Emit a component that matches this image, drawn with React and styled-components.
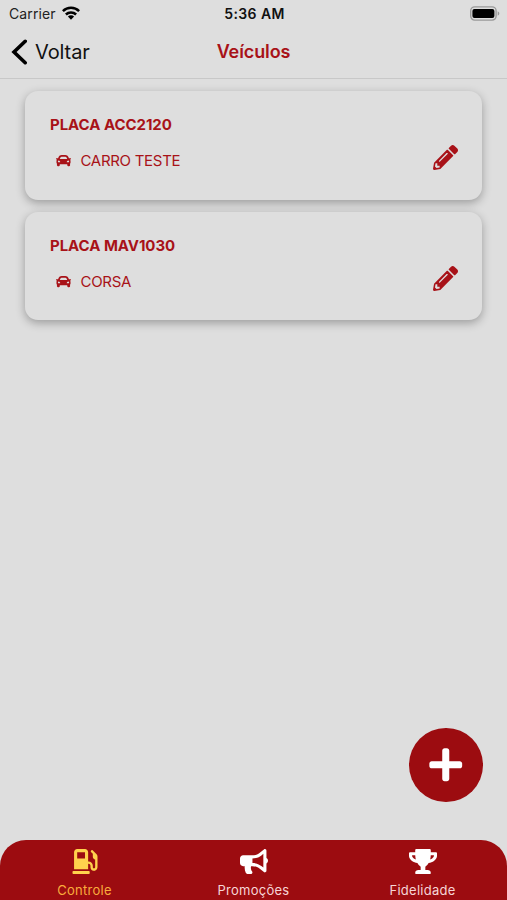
import React from 'react';
import styled, { createGlobalStyle } from 'styled-components';
import {
  FaBullhorn,
  FaCar,
  FaGasPump,
  FaPencilAlt,
  FaPlus,
  FaTrophy,
} from 'react-icons/fa';

const vehicles = [
  { id: 1, plate: 'ACC2120', model: 'CARRO TESTE' },
  { id: 2, plate: 'MAV1030', model: 'CORSA' },
];

const tabs = [
  { label: 'Controle', Icon: FaGasPump, active: true },
  { label: 'Promoções', Icon: FaBullhorn },
  { label: 'Fidelidade', Icon: FaTrophy },
];

const StatusBar = () => (
  <Status>
    <Carrier>
      Carrier
      <svg width='18' height='14' viewBox='0 0 18 14'>
        <g fill='none' stroke='#000' strokeWidth='2.5'>
          <path d='M0.9 5.2a11.5 11.5 0 0 1 16.2 0' />
          <path d='M3.9 8.5a7.2 7.2 0 0 1 10.2 0' />
        </g>
        <path d='M9 13.8L5.9 10.6a4.4 4.4 0 0 1 6.2 0z' />
      </svg>
    </Carrier>
    <Time>5:36 AM</Time>
    <Battery>
      <svg width='31' height='15' viewBox='0 0 31 15'>
        <rect x='1.7' y='0.9' width='25.4' height='13.2' rx='4' fill='none' stroke='#999' strokeWidth='1.4' />
        <rect x='3.4' y='2.9' width='22' height='9.2' rx='2' />
        <path d='M28.7 5.2c2.2 1.1 2.2 3.5 0 4.6z' fill='#999' />
      </svg>
    </Battery>
  </Status>
);

const Vehicle = ({ plate, model }) => (
  <Card>
    <div>
      <Plate>PLACA {plate}</Plate>
      <Model>
        <FaCar size={15} />
        <span>{model}</span>
      </Model>
    </div>
    <EditButton aria-label='Editar'>
      <FaPencilAlt size={25} />
    </EditButton>
  </Card>
);

const App = () => {
  return (
    <Screen>
      <GlobalStyle />
      <StatusBar />
      <Header>
        <BackButton>
          <svg width='16' height='26' viewBox='0 0 16 26'>
            <path
              d='M14.2 2.3L3 13l11.2 10.7'
              fill='none'
              stroke='#000'
              strokeWidth='3.6'
              strokeLinecap='round'
            />
          </svg>
          <span>Voltar</span>
        </BackButton>
        <Title>Veículos</Title>
      </Header>
      <List>
        {vehicles.map((vehicle) => (
          <Vehicle key={vehicle.id} {...vehicle} />
        ))}
      </List>
      <Actions>
        <AddButton aria-label='Adicionar'>
          <FaPlus size={37.5} />
        </AddButton>
      </Actions>
      <TabBar>
        {tabs.map(({ label, Icon, active }) => (
          <Tab key={label} $active={active}>
            <Icon />
            <span>{label}</span>
          </Tab>
        ))}
      </TabBar>
    </Screen>
  );
};

export default App;

const GlobalStyle = createGlobalStyle`
  :root {
    --bg: #dedede;
    --red: #9c0c10;
    --red-text: #a81218;
    --yellow: #ffd24d;
  }
  * {
    box-sizing: border-box;
  }
  body {
    margin: 0;
    background: var(--bg);
    font-family: Inter, 'Liberation Sans', sans-serif;
  }
  button {
    padding: 0;
    border: none;
    background: none;
    font: inherit;
  }
  svg {
    display: block;
    flex-shrink: 0;
  }
`;

const Screen = styled.div`
  display: flex;
  flex-direction: column;
  height: 900px;
  background: var(--bg);
  overflow: hidden;
`;

const Status = styled.div`
  display: grid;
  grid-template-columns: 1fr auto 1fr;
  align-items: center;
  height: 27px;
  padding: 0 7px 0 9px;
`;

const Carrier = styled.div`
  display: flex;
  align-items: center;
  gap: 6px;
  font-size: 14px;
  letter-spacing: 0.1px;
  color: #222;
  svg {
    margin-top: -2px;
  }
`;

const Time = styled.div`
  font-size: 14px;
  font-weight: 600;
  letter-spacing: 0.4px;
  color: #111;
`;

const Battery = styled.div`
  display: flex;
  justify-content: flex-end;
`;

const Header = styled.header`
  display: grid;
  grid-template-columns: 1fr auto 1fr;
  align-items: center;
  height: 52px;
  padding: 0 11px 2px 11px;
  border-bottom: 1px solid #c8c8c8;
`;

const BackButton = styled.button`
  display: flex;
  align-items: center;
  gap: 8px;
  font-size: 20px;
  letter-spacing: -0.1px;
  color: #111;
`;

const Title = styled.h1`
  margin: 0;
  font-size: 18px;
  font-weight: 600;
  letter-spacing: -0.1px;
  color: var(--red-text);
`;

const List = styled.main`
  display: flex;
  flex: 1;
  flex-direction: column;
  gap: 12px;
  padding: 12px 25px 0;
`;

const Card = styled.section`
  display: flex;
  justify-content: space-between;
  height: 108.5px;
  padding: 25px 24px 0 25px;
  border-radius: 13px;
  background: var(--bg);
  box-shadow: 0 3px 10px rgba(0, 0, 0, 0.3);
`;

const Plate = styled.h2`
  margin: 0;
  font-size: 15px;
  font-weight: 700;
  line-height: 18px;
  letter-spacing: -0.05px;
  color: var(--red-text);
`;

const Model = styled.div`
  display: flex;
  align-items: center;
  gap: 9.5px;
  margin: 18px 0 0 6px;
  font-size: 15px;
  line-height: 18px;
  letter-spacing: -0.3px;
  color: var(--red-text);
  svg {
    margin-top: -1px;
  }
`;

const EditButton = styled.button`
  align-self: flex-start;
  margin-top: 29px;
  color: var(--red-text);
`;

const Actions = styled.div`
  display: flex;
  justify-content: flex-end;
  padding: 0 24.5px 38.5px;
`;

const AddButton = styled.button`
  display: flex;
  align-items: center;
  justify-content: center;
  width: 73.5px;
  height: 73.5px;
  border-radius: 50%;
  background: var(--red);
  color: #fff;
`;

const TabBar = styled.nav`
  display: grid;
  grid-template-columns: repeat(3, 1fr);
  height: 60px;
  border-radius: 26px 26px 0 0;
  background: var(--red);
`;

const Tab = styled.button`
  display: flex;
  flex-direction: column;
  align-items: center;
  gap: 8px;
  padding-top: 8.5px;
  font-size: 13px;
  line-height: 16px;
  letter-spacing: 0.25px;
  color: ${({ $active }) => ($active ? 'var(--yellow)' : '#fff')};
  svg {
    width: 28px;
    height: 25px;
  }
  span {
    color: ${({ $active }) => ($active ? '#f9ac3c' : '#f6d5d6')};
  }
`;
